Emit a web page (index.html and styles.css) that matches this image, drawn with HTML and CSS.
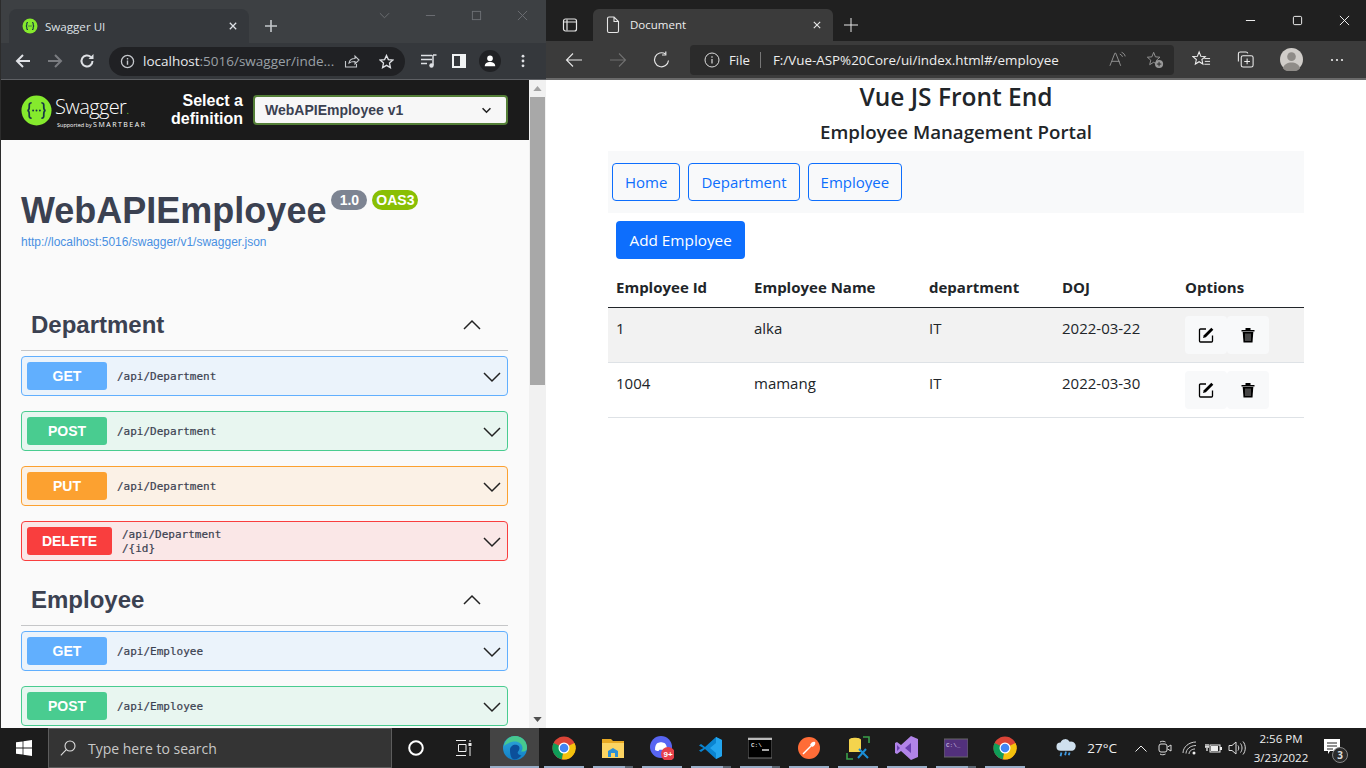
FILE: index.html
```html
<!DOCTYPE html>
<html lang="en">
<head>
<meta charset="utf-8">
<title>Desktop</title>
<link rel="stylesheet" href="styles.css">
</head>
<body>
<div class="desktop">
  <div class="windows">
    <section class="chrome">
      <div class="c-tabs">
        <div class="c-tab">
          <svg class="c-fav" viewBox="0 0 16 16"><circle cx="8" cy="8" r="7.5" fill="#85ea2d"/><path d="M6 4.500c-1.500 0-1.200 1.200-1.200 2.200S4.600 8 3.800 8c.8 0 1 .3 1 1.300s-.3 2.200 1.200 2.200M10 4.500c1.500 0 1.200 1.200 1.200 2.200s.2 1.300 1 1.300c-.8 0-1 .3-1 1.300s.3 2.200-1.200 2.200" fill="none" stroke="#173647" stroke-width="1.100"/><path d="M6.500 8h.8M7.700 8h.7M8.800 8h.7" stroke="#173647" stroke-width="1"/></svg>
          <span class="c-tab-title">Swagger UI</span>
          <svg class="c-tab-x" viewBox="0 0 10 10"><path d="M1 1l8 8M9 1l-8 8" stroke="#dee1e6" stroke-width="1.600"/></svg>
        </div>
        <svg class="c-plus" viewBox="0 0 12 12"><path d="M6 0v12M0 6h12" stroke="#c4c7cb" stroke-width="1.600"/></svg>
        <div class="c-winctl">
          <svg class="ctl" viewBox="0 0 12 12"><path d="M1 3.500l5 5 5-5" fill="none" stroke="#6e7175" stroke-width="1"/></svg>
          <svg class="ctl" viewBox="0 0 12 12"><path d="M1 6h10" stroke="#6e7175" stroke-width="1"/></svg>
          <svg class="ctl" viewBox="0 0 12 12"><rect x="1.500" y="1.500" width="9" height="9" fill="none" stroke="#6e7175"/></svg>
          <svg class="ctl" viewBox="0 0 12 12"><path d="M1 1l10 10M11 1L1 11" stroke="#6e7175" stroke-width="1"/></svg>
        </div>
      </div>
      <div class="c-toolbar">
        <svg class="c-nav" viewBox="0 0 16 16"><path d="M15 8H2M8 2L2 8l6 6" fill="none" stroke="#dfe1e5" stroke-width="2"/></svg>
        <svg class="c-nav" viewBox="0 0 16 16"><path d="M1 8h13M8 2l6 6-6 6" fill="none" stroke="#7a7c80" stroke-width="2"/></svg>
        <svg class="c-nav" viewBox="0 0 16 16"><path d="M13.500 8a5.500 5.500 0 1 1-1.700-4" fill="none" stroke="#dfe1e5" stroke-width="2"/><path d="M14.500 1v5h-5z" fill="#dfe1e5"/></svg>
        <div class="c-omni">
          <svg class="c-info" viewBox="0 0 16 16"><circle cx="8" cy="8" r="6.500" fill="none" stroke="#c4c7cb" stroke-width="1.400"/><path d="M8 7v4.500M8 4.300v1.600" stroke="#c4c7cb" stroke-width="1.500"/></svg>
          <span class="c-url"><span class="c-host">localhost</span>:5016/swagger/inde...</span>
          <svg class="c-share" viewBox="0 0 16 16"><path d="M1.500 8v6h11V11M5 10c.5-3 3-4.500 6-4.500V3l4 4-4 4V8.500c-2.500 0-4.500.3-6 1.500z" fill="none" stroke="#c4c7cb" stroke-width="1.100"/></svg>
          <svg class="c-star" viewBox="0 0 16 16"><path d="M8 1.500l2 4.500 4.800.5-3.600 3.200 1 4.800L8 12.100l-4.200 2.400 1-4.800L1.200 6.500 6 6z" fill="none" stroke="#dfe1e5" stroke-width="1.400"/></svg>
        </div>
        <svg class="c-tool" viewBox="0 0 16 16"><path d="M0 2.500h11M0 6.500h11M0 10.500h6" stroke="#dfe1e5" stroke-width="1.500"/><path d="M12 2v10" stroke="#dfe1e5" stroke-width="1.500"/><circle cx="10.500" cy="12.500" r="2.200" fill="#dfe1e5"/><path d="M12 2h3.500" stroke="#dfe1e5" stroke-width="1.500"/></svg>
        <svg class="c-tool" viewBox="0 0 16 16"><rect x="1" y="1" width="14" height="14" fill="#f1f3f4"/><rect x="3" y="3" width="6" height="10" fill="#35383c"/></svg>
        <div class="c-avatar"><svg viewBox="0 0 16 16"><circle cx="8" cy="5" r="3.200" fill="#fff"/><path d="M2 14c0-3.500 3-4.800 6-4.800s6 1.300 6 4.800z" fill="#fff"/></svg></div>
        <svg class="c-dots" viewBox="0 0 4 16"><circle cx="2" cy="2.500" r="1.600" fill="#dfe1e5"/><circle cx="2" cy="8" r="1.600" fill="#dfe1e5"/><circle cx="2" cy="13.500" r="1.600" fill="#dfe1e5"/></svg>
      </div>
      <div class="c-page">
        <div class="sw-scroll">
          <header class="sw-top">
            <div class="sw-logo">
              <svg class="sw-mark" viewBox="0 0 32 32"><circle cx="16" cy="16" r="15.500" fill="#85ea2d"/><path d="M11 8c-3 0-2.500 2.500-2.500 4.500S8 16 6.500 16c1.500 0 2 1.500 2 3.500S8 24 11 24M21 8c3 0 2.500 2.500 2.500 4.500S24 16 25.500 16c-1.500 0-2 1.500-2 3.500S24 24 21 24" fill="none" stroke="#173647" stroke-width="1.800"/><circle cx="12.500" cy="16" r="1" fill="#173647"/><circle cx="16" cy="16" r="1" fill="#173647"/><circle cx="19.500" cy="16" r="1" fill="#173647"/></svg>
              <div class="sw-brand">
                <span class="sw-name">Swagger<span class="sw-dot">.</span></span>
                <span class="sw-by">Supported by <span class="sw-bear">SMARTBEAR</span></span>
              </div>
            </div>
            <span class="sw-label">Select a<br>definition</span>
            <div class="sw-select"><span>WebAPIEmployee v1</span>
              <svg viewBox="0 0 12 8"><path d="M1.500 1.500L6 6l4.500-4.500" fill="none" stroke="#222" stroke-width="1.800"/></svg></div>
          </header>
          <div class="sw-info">
            <div class="sw-titlerow">
              <h1 class="sw-title">WebAPIEmployee</h1>
              <span class="sw-badge sw-ver">1.0</span>
              <span class="sw-badge sw-oas">OAS3</span>
            </div>
            <a class="sw-link">http://localhost:5016/swagger/v1/swagger.json</a>
          </div>
          <div class="sw-group first">
            <h2 class="sw-h">Department<svg viewBox="0 0 20 20"><path d="M2 14l8-8 8 8" fill="none" stroke="#222" stroke-width="1.500"/></svg></h2>
            <div class="op get"><span class="verb">GET</span><span class="path">/api/Department</span><svg class="op-c" viewBox="0 0 20 20"><path d="M2 6l8 8 8-8" fill="none" stroke="#222" stroke-width="1.500"/></svg></div>
            <div class="op post"><span class="verb">POST</span><span class="path">/api/Department</span><svg class="op-c" viewBox="0 0 20 20"><path d="M2 6l8 8 8-8" fill="none" stroke="#222" stroke-width="1.500"/></svg></div>
            <div class="op put"><span class="verb">PUT</span><span class="path">/api/Department</span><svg class="op-c" viewBox="0 0 20 20"><path d="M2 6l8 8 8-8" fill="none" stroke="#222" stroke-width="1.500"/></svg></div>
            <div class="op del"><span class="verb">DELETE</span><span class="path">/api/Department<br>/{id}</span><svg class="op-c" viewBox="0 0 20 20"><path d="M2 6l8 8 8-8" fill="none" stroke="#222" stroke-width="1.500"/></svg></div>
          </div>
          <div class="sw-group">
            <h2 class="sw-h">Employee<svg viewBox="0 0 20 20"><path d="M2 14l8-8 8 8" fill="none" stroke="#222" stroke-width="1.500"/></svg></h2>
            <div class="op get"><span class="verb">GET</span><span class="path">/api/Employee</span><svg class="op-c" viewBox="0 0 20 20"><path d="M2 6l8 8 8-8" fill="none" stroke="#222" stroke-width="1.500"/></svg></div>
            <div class="op post"><span class="verb">POST</span><span class="path">/api/Employee</span><svg class="op-c" viewBox="0 0 20 20"><path d="M2 6l8 8 8-8" fill="none" stroke="#222" stroke-width="1.500"/></svg></div>
          </div>
        </div>
        <div class="sbar">
          <svg class="sbar-arrow" viewBox="0 0 10 6"><path d="M5 0l5 6H0z" fill="#a3a3a3"/></svg>
          <div class="sbar-track"><div class="sbar-thumb"></div></div>
          <svg class="sbar-arrow" viewBox="0 0 10 6"><path d="M0 0h10L5 6z" fill="#505050"/></svg>
        </div>
      </div>
    </section>

    <section class="edge">
      <div class="e-tabs">
        <svg class="e-sidebar" viewBox="0 0 16 16"><rect x="1.500" y="2" width="13" height="12" rx="2" fill="none" stroke="#e6e6e6" stroke-width="1.200"/><path d="M5 2.500v11M1.500 5h13" stroke="#e6e6e6" stroke-width="1.200"/></svg>
        <div class="e-tab">
          <svg class="e-doc" viewBox="0 0 14 18"><path d="M1.500 2.500q0-1.500 1.500-1.500H8l4.500 4.500V15q0 1.500-1.500 1.500H3q-1.500 0-1.500-1.500zM8 1v4.500h4.500" fill="none" stroke="#e6e6e6" stroke-width="1.100"/></svg>
          <span class="e-tab-title">Document</span>
          <svg class="e-tab-x" viewBox="0 0 10 10"><path d="M1 1l8 8M9 1l-8 8" stroke="#e6e6e6" stroke-width="1.400"/></svg>
        </div>
        <svg class="e-plus" viewBox="0 0 14 14"><path d="M7 0v14M0 7h14" stroke="#e6e6e6" stroke-width="1"/></svg>
        <div class="e-winctl">
          <svg class="ectl" viewBox="0 0 12 12"><path d="M1 6h10" stroke="#fff" stroke-width="1"/></svg>
          <svg class="ectl" viewBox="0 0 12 12"><rect x="1.500" y="1.500" width="9" height="9" rx="1.500" fill="none" stroke="#fff"/></svg>
          <svg class="ectl" viewBox="0 0 12 12"><path d="M1 1l10 10M11 1L1 11" stroke="#fff" stroke-width="1"/></svg>
        </div>
      </div>
      <div class="e-toolbar">
        <svg class="e-nav" viewBox="0 0 18 18"><path d="M17 9H1.500M8 2.500L1.500 9 8 15.500" fill="none" stroke="#e6e6e6" stroke-width="1.100"/></svg>
        <svg class="e-nav" viewBox="0 0 18 18"><path d="M1 9h15.500M10 2.500L16.500 9 10 15.500" fill="none" stroke="#707070" stroke-width="1.100"/></svg>
        <svg class="e-nav" viewBox="0 0 18 18"><path d="M15.500 9.500A7 7 0 1 1 12.500 3" fill="none" stroke="#e6e6e6" stroke-width="1.200"/><path d="M12.800 .5v3.500H9" fill="none" stroke="#e6e6e6" stroke-width="1.200"/></svg>
        <div class="e-omni">
          <svg class="e-info" viewBox="0 0 16 16"><circle cx="8" cy="8" r="7" fill="none" stroke="#ddd" stroke-width="1"/><path d="M8 7v4.500M8 4.300v1.500" stroke="#ddd" stroke-width="1.200"/></svg>
          <span class="e-file">File</span>
          <span class="e-sep"></span>
          <span class="e-url">F:/Vue-ASP%20Core/ui/index.html#/employee</span>
          <svg class="e-read" viewBox="0 0 20 18"><path d="M1 16L6.500 2h1L13 16M3.200 11h8.600" fill="none" stroke="#9a9a9a" stroke-width="1"/><path d="M12 3c1.500.5 2.500 1.500 3 3M14 1c2 .8 3.500 2.200 4 4.500" fill="none" stroke="#9a9a9a" stroke-width="1"/></svg>
          <svg class="e-fav" viewBox="0 0 20 20"><path d="M8.500 1.500l2 5 5 .4-3.800 3.300 1.200 5-4.400-2.700-4.400 2.700 1.200-5L1.500 6.900l5-.4z" fill="none" stroke="#9a9a9a" stroke-width="1"/><circle cx="14.500" cy="14.500" r="4.500" fill="#9a9a9a"/><path d="M14.500 12v5M12 14.500h5" stroke="#2b2b2b" stroke-width="1.100"/></svg>
        </div>
        <svg class="e-tool e-t1" viewBox="0 0 20 20"><path d="M7.500 2l1.800 4.500 4.700.4-3.600 3.100 1.100 4.800-4-2.500-4 2.500 1.100-4.800L1 6.900l4.700-.4z" fill="none" stroke="#eee" stroke-width="1.100"/><path d="M13 9h6M13.500 12h5.500M13 15h6" stroke="#eee" stroke-width="1"/></svg>
        <svg class="e-tool e-t2" viewBox="0 0 20 20"><path d="M2.500 12V4q0-2 2-2h6q1.500 0 2 1.500" fill="none" stroke="#eee" stroke-width="1.100"/><rect x="5.500" y="6" width="12.500" height="12" rx="2" fill="none" stroke="#eee" stroke-width="1.100"/><path d="M11.700 9v6M8.700 12h6" stroke="#eee" stroke-width="1.100"/></svg>
        <div class="e-avatar"><svg viewBox="0 0 24 24"><circle cx="12" cy="12" r="12" fill="#d0cdc9"/><circle cx="12" cy="9" r="4.500" fill="#8f8c88"/><path d="M3 21c1-4 5-6 9-6s8 2 9 6a12 12 0 0 1-18 0z" fill="#8f8c88"/></svg></div>
        <svg class="e-more" viewBox="0 0 14 4"><circle cx="2" cy="2" r="1.100" fill="#eee"/><circle cx="7" cy="2" r="1.100" fill="#eee"/><circle cx="12" cy="2" r="1.100" fill="#eee"/></svg>
      </div>
      <main class="app">
        <h3 class="app-h3">Vue JS Front End</h3>
        <h5 class="app-h5">Employee Management Portal</h5>
        <nav class="app-nav">
          <a class="nav-btn">Home</a>
          <a class="nav-btn">Department</a>
          <a class="nav-btn">Employee</a>
        </nav>
        <div class="add-wrap"><a class="add-btn">Add Employee</a></div>
        <table class="tbl">
          <thead>
            <tr><th class="c1">Employee Id</th><th class="c2">Employee Name</th><th class="c3">department</th><th class="c4">DOJ</th><th>Options</th></tr>
          </thead>
          <tbody>
            <tr class="odd"><td>1</td><td>alka</td><td>IT</td><td>2022-03-22</td><td><div class="acts">
              <span class="act"><svg viewBox="0 0 16 16"><path d="M14.500 8.500V14a1 1 0 0 1-1 1h-11a1 1 0 0 1-1-1V3a1 1 0 0 1 1-1H8" fill="none" stroke="#000" stroke-width="1.300"/><path d="M13.300.8l2 2-7.500 7.500-2.800.8.800-2.800z" fill="#000"/></svg></span>
              <span class="act"><svg viewBox="0 0 16 16"><path d="M1.500 3h13v1.500h-13zM5.500 3V1h5v2" fill="#000"/><path d="M2.700 5h10.600l-.8 10.500h-9z" fill="#000"/><path d="M6 6.500v7.500M8 6.500v7.500M10 6.500v7.500" stroke="#8a8a8a" stroke-width="1"/></svg></span>
            </div></td></tr>
            <tr><td>1004</td><td>mamang</td><td>IT</td><td>2022-03-30</td><td><div class="acts">
              <span class="act"><svg viewBox="0 0 16 16"><path d="M14.500 8.500V14a1 1 0 0 1-1 1h-11a1 1 0 0 1-1-1V3a1 1 0 0 1 1-1H8" fill="none" stroke="#000" stroke-width="1.300"/><path d="M13.300.8l2 2-7.500 7.500-2.800.8.800-2.800z" fill="#000"/></svg></span>
              <span class="act"><svg viewBox="0 0 16 16"><path d="M1.500 3h13v1.500h-13zM5.500 3V1h5v2" fill="#000"/><path d="M2.700 5h10.600l-.8 10.500h-9z" fill="#000"/><path d="M6 6.500v7.500M8 6.500v7.500M10 6.500v7.500" stroke="#8a8a8a" stroke-width="1"/></svg></span>
            </div></td></tr>
          </tbody>
        </table>
      </main>
    </section>
  </div>

  <footer class="taskbar">
    <div class="tb-start"><svg viewBox="0 0 16 16"><path d="M0 2.300l6.600-.9v6.200H0zM7.400 1.300L16 0v7.600H7.400zM0 8.400h6.600v6.200L0 13.700zM7.400 8.400H16V16l-8.600-1.200z" fill="#fff"/></svg></div>
    <div class="tb-search">
      <svg viewBox="0 0 16 16"><circle cx="10" cy="6" r="5" fill="none" stroke="#ddd" stroke-width="1.100"/><path d="M6.300 9.700L.8 15.300" stroke="#ddd" stroke-width="1.100"/></svg>
      <span>Type here to search</span>
    </div>
    <div class="tb-cortana"><svg viewBox="0 0 16 16"><circle cx="8" cy="8" r="6.800" fill="none" stroke="#fff" stroke-width="2"/></svg></div>
    <div class="tb-view"><svg viewBox="0 0 16 16"><path d="M0 .5h10M0 15.500h10M2.500 4.500h7.500v7H2.500z" fill="none" stroke="#eee" stroke-width="1"/><rect x="12.500" y="3" width="3" height="3" fill="#eee"/><path d="M14 0v2M14 7v9" stroke="#eee" stroke-width="1"/></svg></div>
    <div class="tb-apps">
      <div class="app-tile active"><svg viewBox="0 0 24 24"><defs><linearGradient id="eg" x1="0" y1="0" x2="0" y2="1"><stop offset="0" stop-color="#2fa8d8"/><stop offset="1" stop-color="#1280c8"/></linearGradient></defs><circle cx="12" cy="12" r="12" fill="url(#eg)"/><path d="M12 0c7 0 12 5 12 12 0 3-3 4-6 3.500 1-1 1.500-2 1.500-3.500 0-4-4-6.500-7.500-6.500S4 7 1 10C2 4 6.500 0 12 0z" fill="#47c88f"/><path d="M7 14c0-4 4-6 7-5 3 1 3 4 1.500 6-2 2 0 4 3 4.500-2 2-4.500 4-7 4-3 0-4.500-4-4.500-9.500z" fill="#0b4f9a"/></svg></div>
      <div class="app-tile"><svg viewBox="0 0 24 24"><use href="#chromeicon"/></svg></div>
      <div class="app-tile stack"><svg viewBox="0 0 24 24"><path d="M1 3h9l2 2h11v16H1z" fill="#e8a923"/><path d="M1 7h22v15H1z" fill="#fcd462"/><path d="M7 21v-6l5-3 5 3v6h-3v-4h-4v4z" fill="#2d8fd5"/></svg></div>
      <div class="app-tile"><svg viewBox="0 0 24 24"><circle cx="11" cy="11" r="11" fill="#5865f2"/><path d="M5 14c0-4 1-6 2.500-7 3-1 4-1 7 0 1.500 1 2.500 3 2.500 7-1.500 1-3 1.300-3.500 1l-1-1.300h-3l-1 1.300c-.5.300-2 0-3.500-1z" fill="#fff"/><circle cx="18" cy="18" r="7" fill="#e6404a"/><text class="nine" x="18" y="20.500" text-anchor="middle">9+</text></svg></div>
      <div class="app-tile stack"><svg viewBox="0 0 24 24"><path d="M17 1l6 3v16l-6 3L6 13l-4 3-2-1.500 4.500-2.500L0 9.500 2 8l4 3z" fill="#0a84d0"/><path d="M17 1l6 3v16l-6 3zM17 7l-6 5 6 5z" fill="#23a5ee"/></svg></div>
      <div class="app-tile stack"><svg viewBox="0 0 24 24"><rect x="0" y="2" width="24" height="20" fill="#000" stroke="#777"/><rect x="0" y="2" width="24" height="2" fill="#bbb"/><text class="cmd" x="3" y="11">C:\</text><path d="M14 14h7" stroke="#ddd" stroke-width="1.500"/></svg></div>
      <div class="app-tile"><svg viewBox="0 0 24 24"><circle cx="12" cy="12" r="11" fill="#ff6c37"/><path d="M6 18l8-8" stroke="#fff" stroke-width="1.500"/><path d="M13 9c1-3 4-4 5-3s0 4-3 5z" fill="#fff"/></svg></div>
      <div class="app-tile"><svg viewBox="0 0 24 24"><path d="M3 4c0-3 12-3 12 0v12H3z" fill="#f4d44d"/><path d="M17 1h6v6M1 17v6h6" fill="none" stroke="#3aa04a" stroke-width="1.600"/><path d="M12 22l8-9M13 13l9 9" stroke="#1b8ed6" stroke-width="2"/></svg></div>
      <div class="app-tile"><svg viewBox="0 0 24 24"><path d="M16 0l7 3v18l-7 3-10-9-4 3-2-1V7l2-1 4 3z" fill="#b184e8"/><path d="M16 7l-6 5 6 5zM2 9v6l3-3z" fill="#6a3fb0"/></svg></div>
      <div class="app-tile stack"><svg viewBox="0 0 24 24"><rect x="0" y="3" width="24" height="18" fill="#52307c" stroke="#666"/><text class="cmd dim" x="2" y="11">C:\_</text></svg></div>
      <div class="app-tile"><svg viewBox="0 0 24 24"><use href="#chromeicon"/></svg></div>
    </div>
    <div class="tb-tray">
      <svg class="t-weather" viewBox="0 0 24 22"><path d="M6 14a4.500 4.500 0 0 1 0-9 5.500 5.500 0 0 1 10-1 5 5 0 0 1 3 10z" fill="#cfe0ee"/><path d="M7 16l-1 4M12 15l-1 4M16 16l-1 3" stroke="#3f9be4" stroke-width="2"/></svg>
      <span class="t-temp">27°C</span>
      <svg class="t-caret" viewBox="0 0 12 7"><path d="M.5 6.500L6 1l5.500 5.500" fill="none" stroke="#eee"/></svg>
      <svg class="t-ico t-meet" viewBox="0 0 16 16"><rect x="2" y="4" width="8" height="8" rx="2" fill="none" stroke="#ddd"/><path d="M10.500 7l3.500-2v6l-3.500-2M3 2c1.500-1 4-1 5.500 0M3 14c1.500 1 4 1 5.500 0" fill="none" stroke="#ddd"/></svg>
      <svg class="t-ico t-wifi" viewBox="0 0 16 16"><path d="M1 13C1 7 7 2 14 2M4 13.500c0-4 4-8 10-8M7 14c0-3 3-5 6-5" fill="none" stroke="#ccc"/><circle cx="12" cy="13" r="1.500" fill="#eee"/></svg>
      <svg class="t-ico t-pow" viewBox="0 0 18 14"><rect x="6" y="4" width="10" height="7" fill="none" stroke="#eee"/><rect x="7" y="5" width="7" height="5" fill="#eee"/><path d="M16 6h2v3h-2" fill="#eee"/><path d="M1 6h4M2 3v3M4 3v3M3 7v3" stroke="#eee" stroke-width="1.300"/></svg>
      <svg class="t-ico t-vol" viewBox="0 0 18 16"><path d="M1 5.500h3l4-3.500v12l-4-3.500H1z" fill="none" stroke="#ddd"/><path d="M10 5.500c1 1.500 1 3.500 0 5M12.500 3.500c2 2.500 2 6.500 0 9M15 1.500c3 3.500 3 9.500 0 13" fill="none" stroke="#ddd"/></svg>
      <div class="t-clock"><span>2:56 PM</span><span>3/23/2022</span></div>
      <div class="t-note">
        <svg viewBox="0 0 16 16"><path d="M0 0h16v12H6l-2 3v-3H0z" fill="#fff"/><path d="M3 4h10M3 7h10M3 10h6" stroke="#222"/></svg>
        <span class="t-badge">3</span>
      </div>
    </div>
  </footer>
  <svg class="defs" viewBox="0 0 24 24"><defs><g id="chromeicon"><circle cx="12" cy="12" r="11.500" fill="#db4437"/><path d="M12 12L1.500 7A11.500 11.500 0 0 0 10 23.300z" fill="#0f9d58"/><path d="M12 12l10.500-5a11.500 11.500 0 0 1-12.500 16.300z" fill="#f4c20d"/><circle cx="12" cy="12" r="5.500" fill="#fff"/><circle cx="12" cy="12" r="4.300" fill="#4285f4"/></g></defs></svg>
</div>
</body>
</html>
```
FILE: styles.css
```css
* { box-sizing: border-box; }
html, body { margin: 0; padding: 0; height: 100%; overflow: hidden; }
svg { display: block; flex: none; }
.desktop { width: 1366px; height: 768px; display: flex; flex-direction: column; overflow: hidden; background: #202020; }
.defs { width: 0; height: 0; }
.windows { flex: none; height: 728px; display: flex; }

/* Chrome window */
.chrome { width: 546px; flex: none; display: flex; flex-direction: column; background: #3d4043; font-family: "Liberation Sans", Arial, sans-serif; border-left: 1px solid #2c2c2c; }
.c-tabs { height: 43px; flex: none; display: flex; align-items: flex-end; padding-left: 8px; }
.c-tab { width: 240px; height: 34px; background: #35383c; border-radius: 8px 8px 0 0; display: flex; align-items: center; padding: 0 12px 0 13px; }
.c-fav { width: 16px; height: 16px; }
.c-tab-title { margin-left: 7px; font: 11.600px "Open Sans", sans-serif; color: #dee1e6; flex: 1; }
.c-tab-x { width: 8px; height: 8px; }
.c-plus { width: 12px; height: 12px; margin: 0 0 11px 16px; }
.c-winctl { margin-left: auto; align-self: flex-start; display: flex; margin-top: 10px; padding-right: 18px; gap: 35px; }
.ctl { width: 11px; height: 11px; }
.c-toolbar { height: 37px; flex: none; background: #35383c; border-bottom: 1px solid #5e6064; display: flex; align-items: center; padding-left: 14px; }
.c-nav { width: 16px; height: 16px; margin-right: 16px; }
.c-nav:nth-child(3) { margin-right: 14px; }
.c-omni { width: 296px; height: 29px; background: #202124; border-radius: 15px; display: flex; align-items: center; padding-left: 11px; }
.c-info { width: 15px; height: 15px; }
.c-url { margin-left: 8px; font: 13.500px "Open Sans", sans-serif; color: #9aa0a6; width: 198px; white-space: nowrap; }
.c-host { color: #e8eaed; }
.c-share { width: 16px; height: 16px; margin-left: 3px; }
.c-star { width: 15px; height: 15px; margin-left: 19px; }
.c-tool { width: 16px; height: 16px; margin-left: 16px; }
.c-tool + .c-tool { margin-left: 14px; }
.c-avatar { width: 22px; height: 22px; border-radius: 50%; background: #202124; margin-left: 12px; padding: 4px; }
.c-dots { width: 4px; height: 14px; margin-left: 20px; }
.c-page { flex: 1; min-height: 0; display: flex; background: #fafafa; }
.sw-scroll { flex: 1; min-width: 0; overflow: hidden; }
.sw-top { height: 60px; background: #1b1b1b; display: flex; align-items: center; padding: 0 21px 0 20px; }
.sw-logo { display: flex; align-items: center; gap: 3px; width: 150px; flex: none; }
.sw-mark { width: 31px; height: 31px; }
.sw-brand { display: flex; flex-direction: column; color: #fff; margin-top: 5px; }
.sw-name { font: 300 20px/22px "Open Sans", sans-serif; letter-spacing: -.6px; }
.sw-dot { color: #85ea2d; font-size: 12px; }
.sw-by { font: 5.500px/7px "Open Sans", sans-serif; white-space: nowrap; margin-left: 2px; }
.sw-bear { font-size: 7px; letter-spacing: 1.500px; }
.sw-label { width: 72px; flex: none; text-align: right; font: bold 16px/18px "Liberation Sans", sans-serif; color: #fff; }
.sw-select { margin-left: 10px; flex: 1; height: 30px; background: #f7f7f7; border: 2px solid #547f37; border-radius: 4px; display: flex; align-items: center; justify-content: space-between; padding: 0 14px 0 10px; font: bold 14px "Liberation Sans", sans-serif; color: #3b4151; }
.sw-select svg { width: 11px; height: 7px; }
.sw-info { padding: 48px 21px 0 20px; }
.sw-titlerow { display: flex; align-items: flex-start; }
.sw-title { margin: 0; font: bold 36px/46px "Liberation Sans", sans-serif; color: #3b4151; }
.sw-badge { height: 20px; border-radius: 10px; color: #fff; font: bold 14px/20px "Liberation Sans", sans-serif; text-align: center; margin-top: 2px; }
.sw-ver { width: 36px; margin-left: 5px; background: #7d8492; }
.sw-oas { width: 46px; margin-left: 5px; background: #89bf04; }
.sw-link { display: block; margin-top: 0; font: 12px/16px "Liberation Sans", sans-serif; color: #4990e2; }
.sw-group { padding: 0 21px 0 20px; margin-top: 14px; }
.sw-group.first { margin-top: 50px; }
.sw-h { margin: 0 0 5px; height: 51px; padding: 0 26px 0 10px; border-bottom: 1px solid #c5c6c8; display: flex; align-items: center; justify-content: space-between; font: bold 24px/30px "Liberation Sans", sans-serif; color: #3b4151; }
.sw-h svg { width: 20px; height: 20px; }
.op { height: 40px; margin-bottom: 15px; border: 1px solid; border-radius: 4px; display: flex; align-items: center; padding: 0 5px; }
.sw-group .op:last-child { margin-bottom: 0; }
.verb { width: 80px; height: 28px; border-radius: 3px; color: #fff; font: bold 14px/28px "Liberation Sans", sans-serif; text-align: center; flex: none; }
.path { margin: 2px 0 0 10px; font: 11px/14px "DejaVu Sans Mono", monospace; color: #3b4151; -webkit-text-stroke: .2px #3b4151; flex: 1; }
.op-c { width: 20px; height: 20px; margin-top: 2px; }
.get { background: #ebf3fb; border-color: #61affe; } .get .verb { background: #61affe; }
.post { background: #e8f6f0; border-color: #49cc90; } .post .verb { background: #49cc90; }
.put { background: #fbf1e6; border-color: #fca130; } .put .verb { background: #fca130; }
.del { background: #fae7e7; border-color: #f93e3e; } .del .verb { background: #f93e3e; width: 85px; }
.sbar { width: 17px; flex: none; background: #f1f1f1; display: flex; flex-direction: column; align-items: center; }
.sbar-arrow { width: 9px; height: 5px; margin: 6px 0; }
.sbar-track { flex: 1; width: 100%; }
.sbar-thumb { height: 288px; margin: 0 1px; background: #a8a8a8; }

/* Edge window */
.edge { flex: 1; min-width: 0; display: flex; flex-direction: column; background: #fff; font-family: "Open Sans", sans-serif; }
.e-tabs { height: 41px; flex: none; background: #202020; display: flex; align-items: flex-end; padding-left: 16px; }
.e-sidebar { width: 16px; height: 16px; margin: 0 15px 8px 0; }
.e-tab { width: 240px; height: 32px; background: #3b3b3b; border-radius: 6px 6px 0 0; display: flex; align-items: center; padding: 0 12px 0 13px; }
.e-doc { width: 14px; height: 18px; }
.e-tab-title { margin: -1px 0 0 10px; font-size: 11.500px; color: #eee; flex: 1; }
.e-tab-x { width: 8px; height: 8px; }
.e-plus { width: 14px; height: 14px; margin: 0 0 9px 11px; }
.e-winctl { margin-left: auto; align-self: flex-start; margin-top: 15px; padding-right: 16px; display: flex; gap: 36px; }
.ectl { width: 11px; height: 11px; }
.e-toolbar { height: 39px; flex: none; background: #3b3b3b; border-bottom: 2px solid #6a6a6a; display: flex; align-items: center; padding-left: 19px; }
.e-nav { width: 18px; height: 18px; margin-right: 26px; }
.e-nav:nth-child(3) { margin-right: 19px; }
.e-omni { width: 484px; height: 30px; background: #2b2b2b; border-radius: 4px; display: flex; align-items: center; padding-left: 14px; }
.e-info { width: 16px; height: 16px; }
.e-file { margin-left: 9px; font-size: 13.200px; color: #eee; }
.e-sep { width: 1px; height: 16px; background: #777; margin: 0 12px 0 10px; }
.e-url { flex: 1; font-size: 13.400px; color: #eee; white-space: nowrap; }
.e-read { width: 18px; height: 17px; margin-right: 19px; }
.e-fav { width: 18px; height: 18px; margin-right: 10px; }
.e-tool { width: 19px; height: 19px; }
.e-t1 { margin-left: 18px; }
.e-t2 { margin-left: 25px; }
.e-avatar { width: 23px; height: 23px; margin-left: 25px; }
.e-more { width: 14px; height: 4px; margin-left: 27px; }

.app { flex: 1; padding: 0 62px; color: #212529; }
.app-h3 { margin: 0; height: 34px; text-align: center; font-size: 24.500px; font-weight: 600; line-height: 34px; }
.app-h5 { margin: 0 0 1px; height: 36px; text-align: center; font-size: 18.700px; font-weight: 600; line-height: 36px; }
.app-nav { height: 62px; background: #f8f9fa; display: flex; align-items: center; gap: 8px; padding-left: 4px; }
.nav-btn { height: 38px; padding: 0 12px; border: 1px solid #0d6efd; border-radius: 4px; color: #0d6efd; font-size: 15px; line-height: 36px; }
.add-wrap { padding: 8px 8px 0; }
.add-btn { display: inline-block; height: 38px; padding: 0 13.500px; background: #0d6efd; border-radius: 4px; color: #fff; font-size: 15.300px; line-height: 38px; }
.tbl { width: 100%; margin-top: 8px; border-collapse: collapse; table-layout: fixed; font-size: 15px; }
.tbl th { height: 40px; padding: 8px; text-align: left; font-weight: 700; border-bottom: 1px solid #212529; }
.c1 { width: 138px; } .c2 { width: 175px; } .c3 { width: 133px; } .c4 { width: 123px; }
.tbl td { height: 55px; padding: 8px; vertical-align: top; line-height: 24px; border-bottom: 1px solid #dee2e6; }
.odd td { background: #f2f2f2; }
.acts { display: flex; }
.act { width: 42px; height: 38px; background: #f8f9fa; border-radius: 4px; display: flex; align-items: center; justify-content: center; }
.act svg { width: 16px; height: 16px; }

/* Taskbar */
.taskbar { height: 40px; flex: none; background: #1c1c1c; display: flex; align-items: center; font-family: "Open Sans", sans-serif; color: #fff; }
.tb-start { width: 48px; display: flex; justify-content: center; }
.tb-start svg { width: 16px; height: 16px; }
.tb-search { width: 344px; height: 40px; background: #343434; border: 1px solid #5c5c5c; display: flex; align-items: center; padding-left: 11px; gap: 12px; color: #c8c8c8; font-size: 14px; }
.tb-search svg { width: 16px; height: 16px; }
.tb-cortana { width: 48px; display: flex; justify-content: center; }
.tb-cortana svg { width: 16px; height: 16px; }
.tb-view { width: 48px; display: flex; justify-content: center; }
.tb-view svg { width: 16px; height: 16px; }
.tb-apps { height: 40px; margin-left: 2px; display: flex; }
.app-tile { width: 49px; height: 40px; display: flex; justify-content: center; padding-top: 8px; position: relative; }
.app-tile svg { width: 24px; height: 24px; }
.app-tile::after { content: ""; position: absolute; left: 5px; right: 4px; bottom: 0; height: 2px; background: #99aec8; }
.app-tile.active { background: #444; }
.app-tile.active::after { left: 0; right: 0; }
.stack::before { content: ""; position: absolute; right: 4px; bottom: 0; width: 8px; height: 2px; background: #5b6672; z-index: 1; }
.nine { font: bold 8px "Liberation Sans", sans-serif; fill: #fff; }
.cmd { font: bold 6px "Liberation Mono", monospace; fill: #ddd; }
.dim { fill: #b9a9d4; }
.tb-tray { margin-left: auto; display: flex; align-items: center; height: 40px; padding-right: 17px; font-size: 13px; }
.t-weather { width: 22px; height: 20px; }
.t-temp { margin-left: 10px; font-size: 13.500px; color: #eee; }
.t-caret { width: 12px; height: 7px; margin-left: 18px; }
.t-ico { width: 16px; height: 16px; }
.t-meet { margin-left: 10px; }
.t-wifi { margin-left: 9px; }
.t-pow { margin-left: 6px; width: 18px; height: 14px; }
.t-vol { margin-left: 6px; width: 18px; }
.t-clock { width: 66px; margin-left: 2px; display: flex; flex-direction: column; align-items: center; font-size: 11.500px; line-height: 19px; color: #eee; }
.t-note { width: 32px; height: 40px; margin-left: 3px; position: relative; display: flex; align-items: center; justify-content: center; }
.t-note svg { width: 16px; height: 16px; margin: -3px 0 0 -2px; }
.t-badge { position: absolute; left: 15px; top: 19px; width: 16px; height: 16px; border-radius: 50%; background: #2b2b2b; border: 1px solid #888; text-align: center; font: bold 10px/14px "Open Sans", sans-serif; color: #ddd; }
```
